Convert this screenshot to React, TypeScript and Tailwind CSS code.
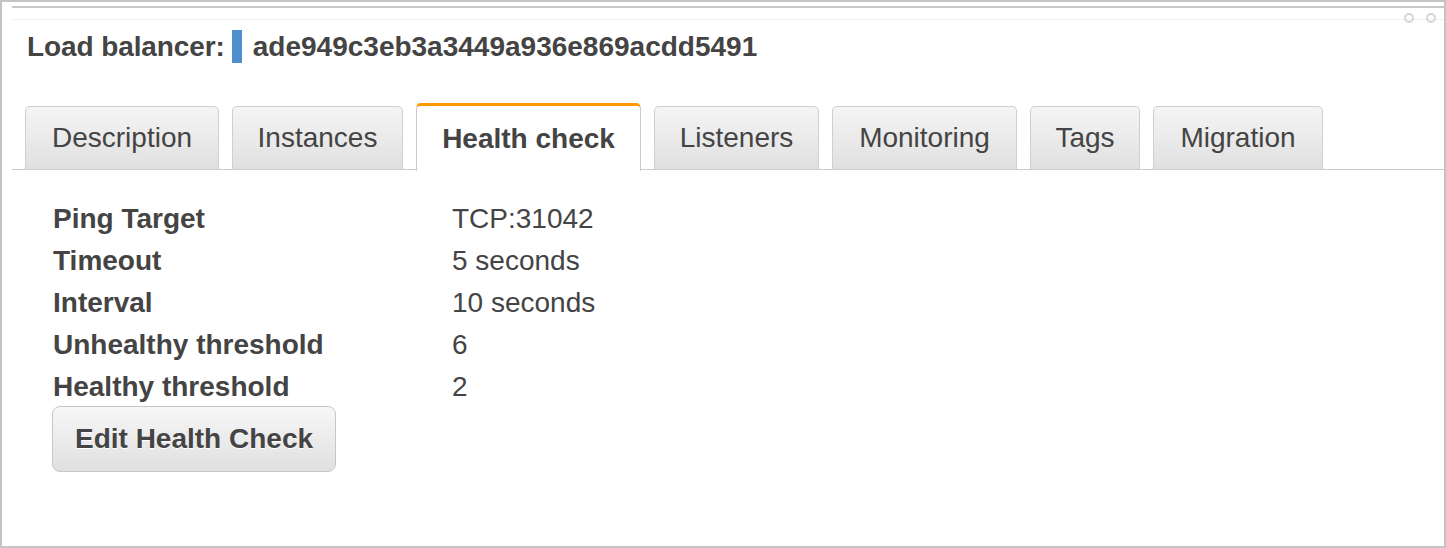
import React from "react";

const tabs = [
  { label: "Description", w: "w-[194px]" },
  { label: "Instances", w: "w-[171px]" },
  { label: "Health check", w: "w-[225px]", active: true },
  { label: "Listeners", w: "w-[165px]" },
  { label: "Monitoring", w: "w-[185px]" },
  { label: "Tags", w: "w-[110px]" },
  { label: "Migration", w: "w-[170px]" },
];

const rows = [
  ["Ping Target", "TCP:31042"],
  ["Timeout", "5 seconds"],
  ["Interval", "10 seconds"],
  ["Unhealthy threshold", "6"],
  ["Healthy threshold", "2"],
];

export default function App() {
  return (
    <div className="w-[1446px] h-[548px] bg-white border-2 border-[#c4c4c4] relative overflow-hidden font-['Liberation_Sans','Helvetica',sans-serif] text-[#444]">
      {/* top remnant strip */}
      <div className="ml-[10px] mt-[4px] border-t-2 border-[#c8c8c8] h-[14px] border-b border-b-[#efefef] relative">
        <div className="absolute right-[8px] top-[5px] flex gap-[12px]">
          <div className="w-[10px] h-[10px] rounded-full border-[2.5px] border-[#d6d6d6]" />
          <div className="w-[10px] h-[10px] rounded-full border-[2.5px] border-[#d6d6d6]" />
        </div>
      </div>

      <div className="ml-[10px]">
        {/* title */}
        <div className="h-[53px] flex items-center pl-[15px]">
          <span className="text-[28px] font-bold leading-none tracking-[-0.1px]">Load balancer:</span>
          <span className="ml-[7px] w-[10px] h-[33px] bg-[#4f8fcf]" />
          <span className="ml-[11px] text-[28px] font-bold leading-none">ade949c3eb3a3449a936e869acdd5491</span>
        </div>

        {/* tabs */}
        <div className="h-[97px] flex items-end gap-[13px] pl-[13px] border-b-[1.5px] border-[#cccccc]">
          {tabs.map((t) =>
            t.active ? (
              <div
                key={t.label}
                className={`${t.w} h-[68px] -mb-[2px] bg-white border-t-[3px] border-t-[#ff9900] border-x-[1.5px] border-x-[#cccccc] rounded-t-[5px] flex items-center justify-center text-[28px] font-bold`}
              >
                {t.label}
              </div>
            ) : (
              <div
                key={t.label}
                className={`${t.w} h-[63px] bg-gradient-to-b from-[#f5f5f5] to-[#e0e0e0] border-[1.5px] border-b-0 border-[#cfcfcf] rounded-t-[5px] flex items-center justify-center text-[28px]`}
              >
                {t.label}
              </div>
            )
          )}
        </div>

        {/* content */}
        <div className="pt-[28px] pl-[41px]">
          {rows.map(([k, v]) => (
            <div key={k} className="h-[42px] flex items-center text-[28px]">
              <span className="w-[399px] font-bold">{k}</span>
              <span>{v}</span>
            </div>
          ))}
          <button className="-mt-[2px] -ml-[1px] w-[284px] h-[66px] rounded-[8px] border-[1.5px] border-[#c6c6c6] bg-gradient-to-b from-[#f7f7f7] to-[#e0e0e0] text-[28px] font-bold text-[#444] [text-shadow:0_1px_0_#fff] flex items-center justify-center">
            Edit Health Check
          </button>
        </div>
      </div>
    </div>
  );
}
